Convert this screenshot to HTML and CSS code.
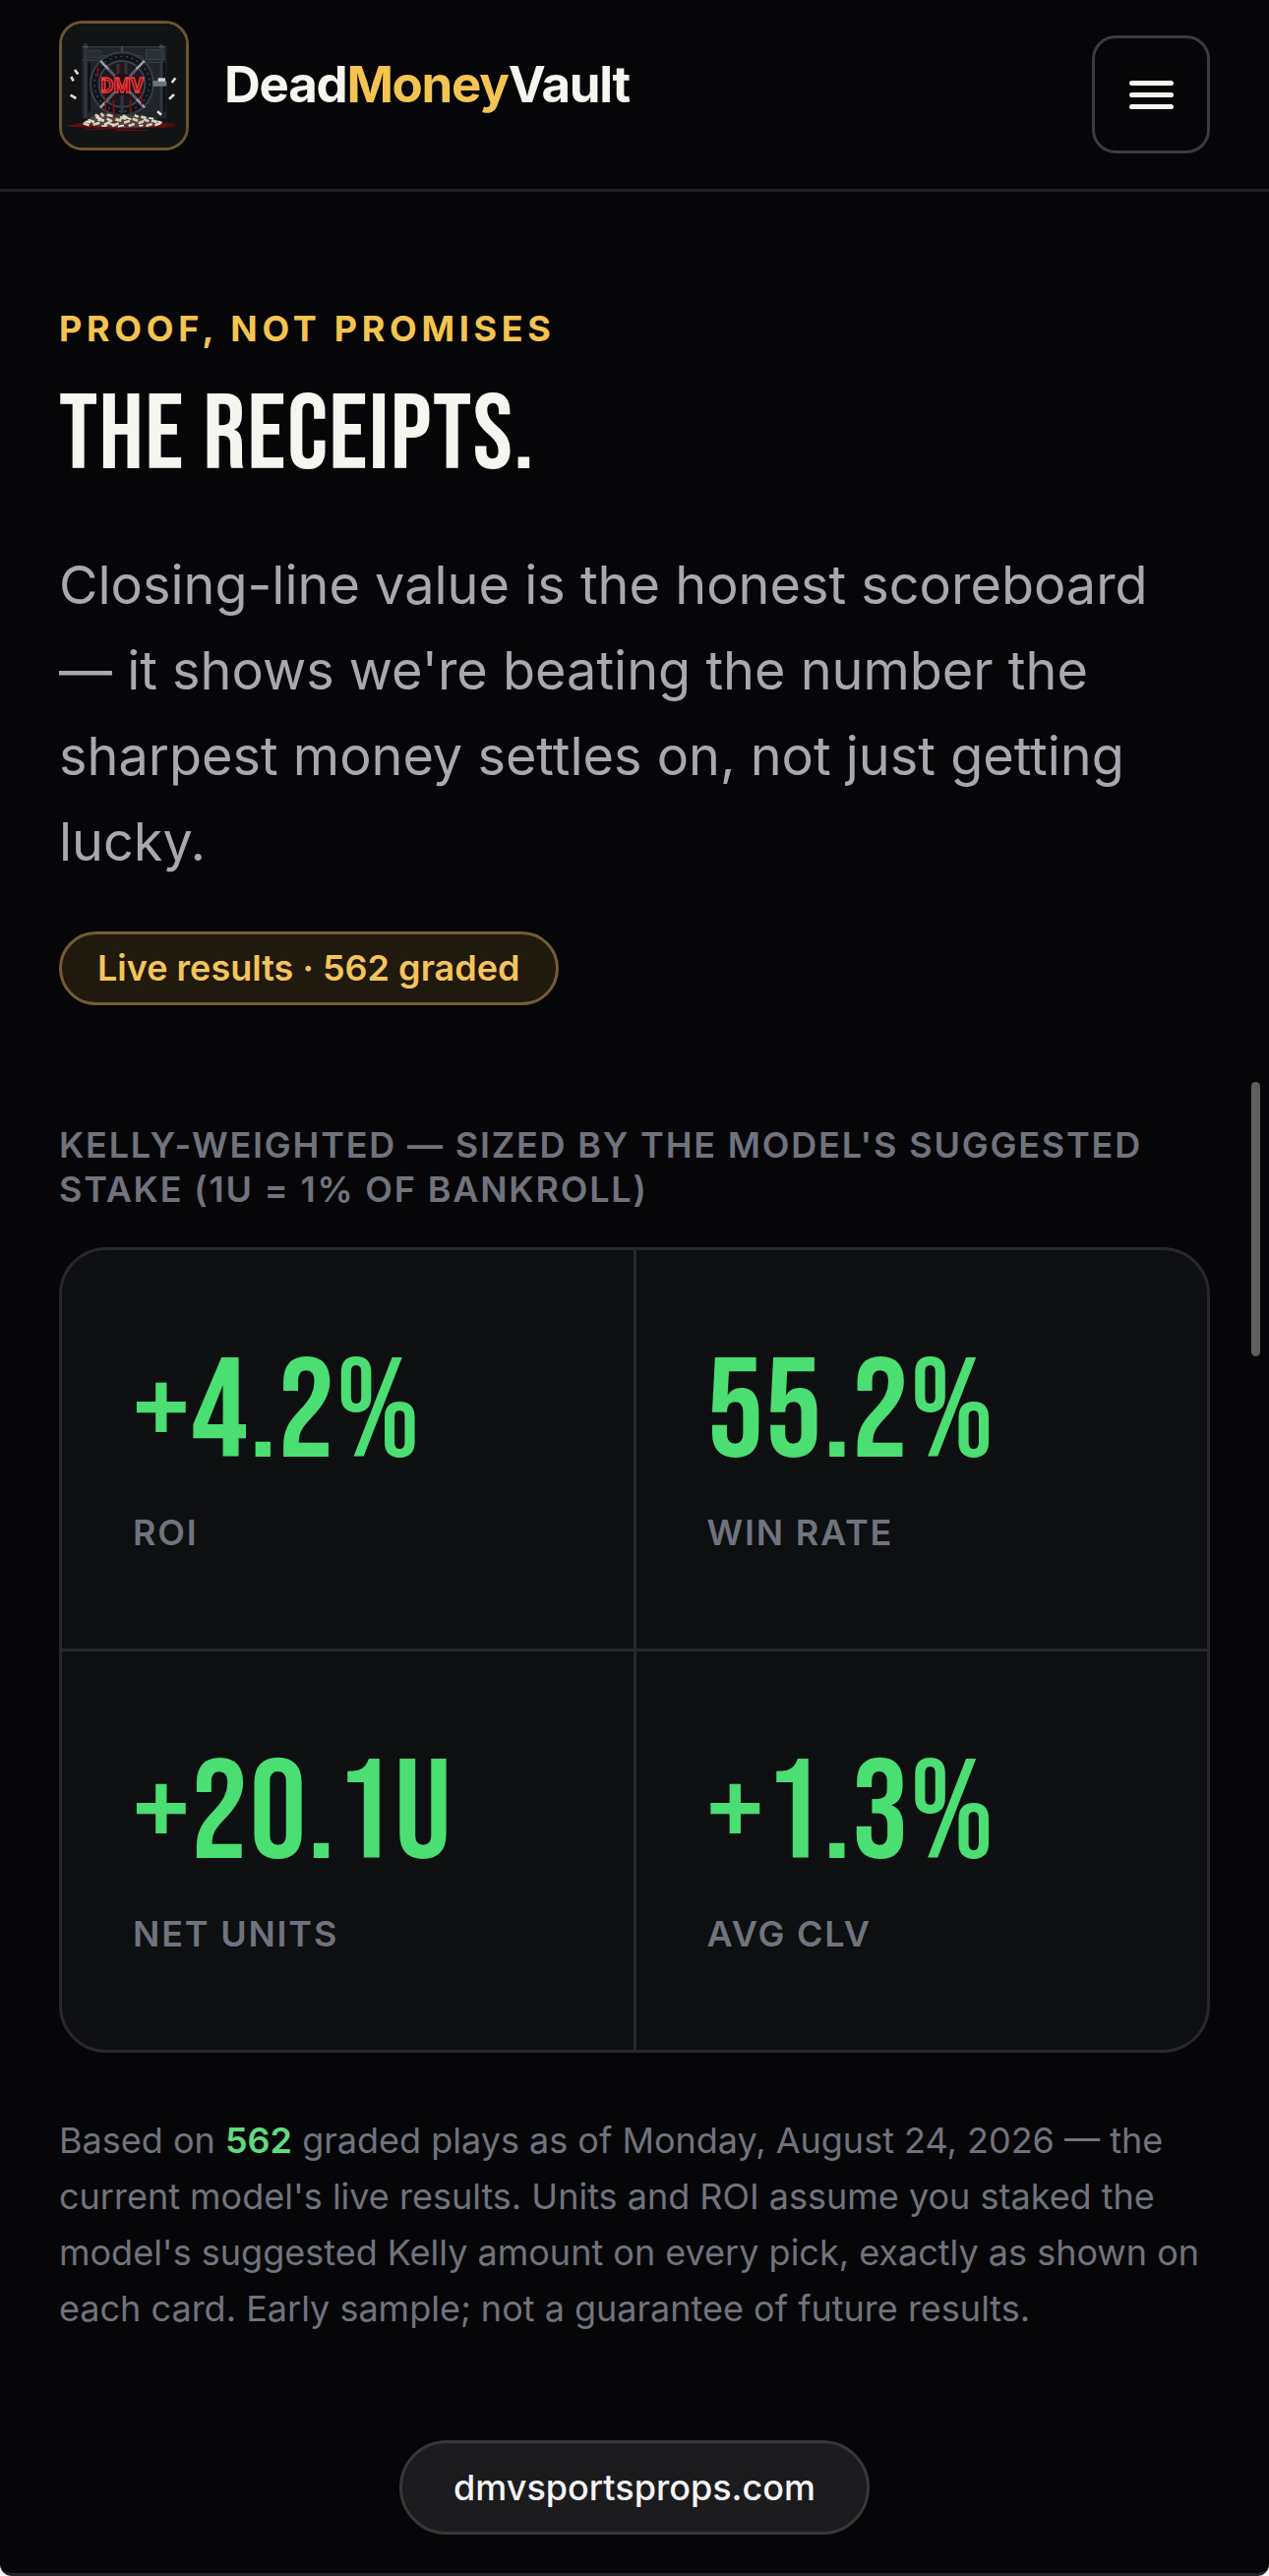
FILE: index.html
```html
<!DOCTYPE html>
<html lang="en">
<head>
  <meta charset="utf-8">
  <meta name="viewport" content="width=device-width, initial-scale=1">
  <title>DeadMoneyVault</title>
  <link rel="stylesheet" href="styles.css">
</head>
<body>
<div class="page">

  <header class="header">
    <a class="brand" href="#">
      <svg class="logo" viewBox="69 72 378 378" aria-hidden="true">
        <rect x="60" y="63" width="396" height="396" fill="#111315"/>
        <!-- vault frame -->
        <rect x="130" y="143" width="258" height="218" fill="#20242b"/>
        <path d="M130 143H388M130 183H180L192 170H246M262 170H310L326 190H388" fill="none" stroke="#3d444e" stroke-width="3"/>
        <rect x="326" y="152" width="54" height="30" fill="#2b3038" stroke="#454c56" stroke-width="2"/>
        <rect x="142" y="154" width="46" height="22" fill="#272c33" stroke="#3b424b" stroke-width="2"/>
        <path d="M141 132V360M372 134V345" stroke="#303640" stroke-width="9"/>
        <path d="M152 190V340M381 190V340" stroke="#0b0d10" stroke-width="7"/>
        <path d="M134 143H150M364 143H380M252 142V165" stroke="#4a515c" stroke-width="5"/>
        <!-- round door -->
        <circle cx="252" cy="256" r="96" fill="#111419" stroke="#343a43" stroke-width="7"/>
        <circle cx="252" cy="256" r="84" fill="none" stroke="#4b525d" stroke-width="4" stroke-dasharray="5 12"/>
        <circle cx="252" cy="256" r="70" fill="#171a20" stroke="#3a404a" stroke-width="6"/>
        <circle cx="252" cy="256" r="52" fill="none" stroke="#3a1014" stroke-width="9" stroke-dasharray="10 7"/>
        <path d="M187 186L321 328M320 186L186 328" stroke="#555c66" stroke-width="9"/>
        <path d="M187 186L210 210M320 186L296 210M321 328L296 302M186 328L206 307" stroke="#bfc3c8" stroke-width="6" stroke-dasharray="4 2"/>
        <path d="M240 195V232M264 192V232M252 290V345" stroke="#30353e" stroke-width="9"/>
        <path d="M178 205V235M202 300V350M226 305V350M278 305V345M312 280V320M240 205V222" stroke="#7d1017" stroke-width="5"/>
        <circle cx="252" cy="256" r="32" fill="#201014"/>
        <rect x="346" y="246" width="42" height="17" rx="4" fill="#6d747d"/>
        <rect x="362" y="238" width="22" height="10" fill="#d2d4d6"/>
        <text class="logo-text" x="252" y="281" text-anchor="middle">DMV</text>
        <!-- blood and the pile of notes -->
        <path d="M78 382L130 378 200 370 320 370 430 378 380 384 424 388 330 390 250 396 160 390 100 387Z" fill="#5a0b10"/>
        <path d="M90 384H412M140 394H200M230 398H330M110 378H160" stroke="#8a1218" stroke-width="2"/>
        <path d="M132 376L166 352 200 346 236 356 262 350 310 354 352 360 376 378 330 388 254 390 180 386Z" fill="#4d423b"/>
        <path d="M134 376L152 382M148 366L168 372M170 350L182 356M188 345L196 355M206 350L224 354M164 380L184 374M178 364L198 368M198 380L216 372M206 362L222 370M222 384L242 376M232 364L250 368M246 358L264 362M258 374L276 368M272 384L290 378M284 362L300 368M302 376L318 370M318 364L334 370M326 384L344 378M342 368L360 372M352 382L370 376M310 356L326 360M290 352L302 356" stroke="#d9cfbd" stroke-width="8"/>
        <path d="M140 370L156 374M172 358L190 362M190 384L206 384M214 378L226 380M240 386L258 382M268 360L280 364M304 384L316 382M334 360L348 362M362 370L374 374" stroke="#f2ecdf" stroke-width="5"/>
        <path d="M154 378L160 384M228 372L236 374M264 380L270 386M318 378L324 380" stroke="#8c1218" stroke-width="4"/>
        <!-- loose notes in the air -->
        <path d="M108 213L118 226M97 234L104 247M95 290L112 300M404 252L415 238M396 302L411 288M360 340L372 350M254 352L268 360" stroke="#e0d8cb" stroke-width="8"/>
      </svg>
      <span class="brand-name">Dead<b>Money</b>Vault</span>
    </a>
    <button class="menu" type="button" aria-label="Menu">
      <span></span><span></span><span></span>
    </button>
  </header>

  <main class="main">
    <p class="eyebrow">Proof, not promises</p>
    <h1>The receipts.</h1>
    <p class="lead">Closing-line value is the honest scoreboard — it shows we're beating the number the sharpest money settles on, not just getting lucky.</p>
    <span class="badge">Live results · 562 graded</span>

    <h2>Kelly-weighted — sized by the model's suggested stake (1u = 1% of bankroll)</h2>
    <div class="stats">
      <div class="stat"><div class="num">+4.2%</div><div class="label">ROI</div></div>
      <div class="stat"><div class="num">55.2%</div><div class="label">Win rate</div></div>
      <div class="stat"><div class="num">+20.1U</div><div class="label">Net units</div></div>
      <div class="stat"><div class="num">+1.3%</div><div class="label">Avg CLV</div></div>
    </div>

    <p class="note">Based on <b>562</b> graded plays as of Monday, August 24, 2026 — the current model's live results. Units and ROI assume you staked the model's suggested Kelly amount on every pick, exactly as shown on each card. Early sample; not a guarantee of future results.</p>
  </main>

  <footer class="footer">
    <a class="site" href="#">dmvsportsprops.com</a>
  </footer>

  <div class="scrollbar"></div>
</div>
</body>
</html>
```
FILE: styles.css
```css
* {box-sizing: border-box;}
html {background: #fff;}
body {margin: 0; font-family: Inter, "Liberation Sans", sans-serif; font-size: 36px; color: #f7f5ef;}
h1, h2, p {margin: 0;}
a {color: inherit; text-decoration: none;}

.page {position: relative; display: flex; flex-direction: column; min-height: 100vh; background: #060608; border-bottom: 3px solid #242428; border-radius: 0 0 12px 12px; overflow: hidden;}

/* header */
.header {display: flex; align-items: center; justify-content: space-between; height: 195px; padding: 0 60px; border-bottom: 3px solid #212126;}
.brand {display: flex; align-items: center; gap: 36px; padding-bottom: 18px;}
.logo {width: 132px; height: 132px; border: 3px solid #6b552e; border-radius: 24px;}
.logo-text {font-family: Roboto, sans-serif; font-size: 60px; font-weight: 700; fill: #5c0d12; stroke: #f2383c; stroke-width: 4px;}
.brand-name {padding-bottom: 3px; font-size: 51px; font-weight: 700; letter-spacing: -0.025em;}
.brand-name b {font-weight: 700; color: #f4c452;}
.menu {display: flex; flex-direction: column; align-items: center; justify-content: center; gap: 7px; width: 120px; height: 120px; padding: 0; background: none; border: 3px solid #3b3b42; border-radius: 24px; cursor: pointer;}
.menu span {width: 45px; height: 5px; border-radius: 3px; background: #f7f5ef;}

/* intro */
.main {padding: 117px 60px 0;}
.eyebrow {font-size: 36px; line-height: 45px; font-weight: 700; letter-spacing: 0.13em; text-transform: uppercase; color: #f4c452;}
h1 {margin: 27px 0 47px; font-family: "Bebas Neue", "Liberation Sans Narrow", sans-serif; font-size: 108px; line-height: 120px; font-weight: 400; letter-spacing: 0.012em; text-transform: uppercase;}
.lead {font-size: 54px; line-height: 87px; color: #a8a9b0;}
.badge {display: inline-block; margin-top: 48px; padding: 0 36px; font-size: 36px; line-height: 69px; font-weight: 600; color: #f4c45c; background: #20190e; border: 3px solid #735d33; border-radius: 39px;}

/* results */
h2 {margin: 120px 0 36px; font-size: 36px; line-height: 45px; font-weight: 600; letter-spacing: 0.05em; text-transform: uppercase; color: #70737d;}
.stats {display: grid; grid-template-columns: 1fr 1fr; gap: 3px; background: #27282c; border: 3px solid #27282c; border-radius: 48px; overflow: hidden;}
.stat {height: 405px; padding: 95px 72px 0; background: #0d0f11;}
.num {font-family: "Bebas Neue", "Liberation Sans Narrow", sans-serif; font-size: 144px; line-height: 144px; letter-spacing: 0.012em; color: #4ade73;}
.label {margin-top: 26px; font-size: 36px; line-height: 45px; font-weight: 600; letter-spacing: 0.05em; text-transform: uppercase; color: #70737d;}
.note {margin-top: 61px; font-size: 36px; line-height: 57px; color: #70737d;}
.note b {font-weight: 600; color: #5fdb7f;}

/* address pill at the bottom */
.footer {display: flex; justify-content: center; margin-top: auto; padding: 0 60px 39px;}
.site {padding: 0 52px; font-size: 36px; line-height: 90px; font-weight: 500; color: #f5f5f7; background: #1c1c1e; border: 3px solid #37373a; border-radius: 48px;}

.scrollbar {position: absolute; top: 1100px; right: 9px; width: 9px; height: 279px; border-radius: 5px; background: #5e5e5e;}
```
